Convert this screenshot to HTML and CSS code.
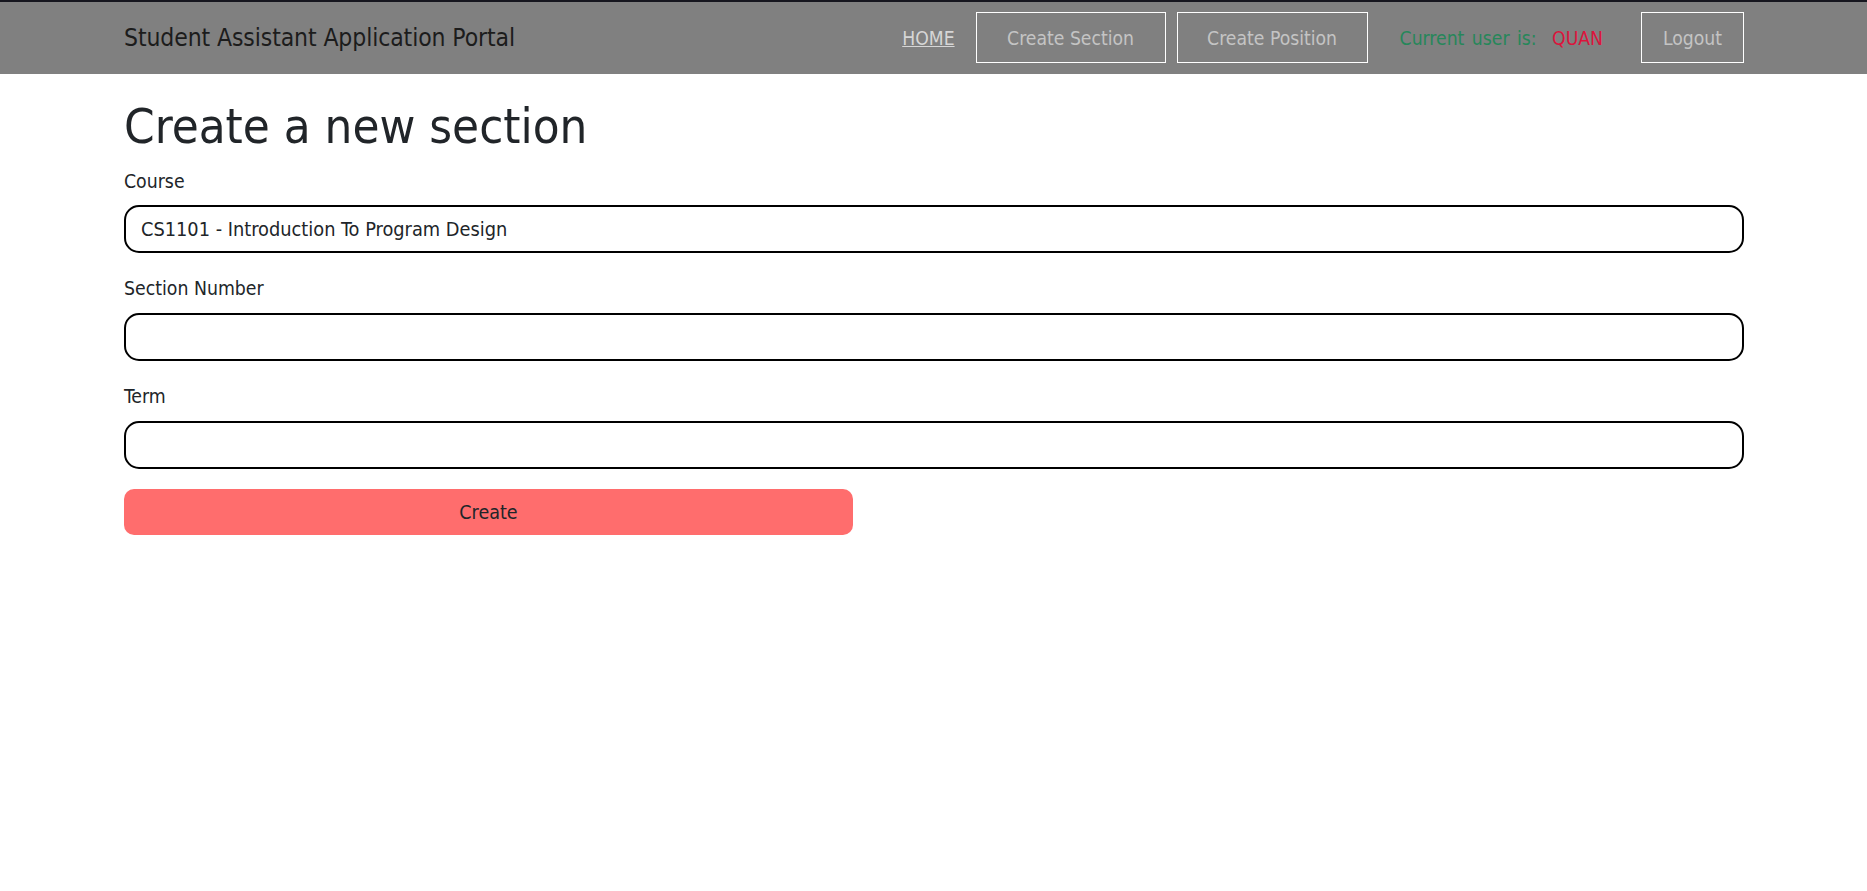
FILE: index.html
```html
<!DOCTYPE html>
<html lang="en">
<head>
<meta charset="utf-8">
<title>Create a new section</title>
<link rel="stylesheet" href="styles.css">
</head>
<body>
<header class="topbar">
  <div class="container bar-inner">
    <a class="brand" href="#">Student Assistant Application Portal</a>
    <nav class="nav">
      <a class="nav-home" href="#">HOME</a>
      <a class="nav-box box-section" href="#">Create Section</a>
      <a class="nav-box box-position" href="#">Create Position</a>
      <span class="user">Current user is: <span class="user-name">QUAN</span></span>
      <a class="nav-box box-logout" href="#">Logout</a>
    </nav>
  </div>
</header>
<main class="container">
  <h1 class="title">Create a new section</h1>
  <form class="form">
    <div class="field">
      <label class="label" for="course">Course</label>
      <div class="input select-like" id="course">CS1101 - Introduction To Program Design</div>
    </div>
    <div class="field">
      <label class="label" for="section">Section Number</label>
      <input class="input" id="section" type="text">
    </div>
    <div class="field">
      <label class="label" for="term">Term</label>
      <input class="input" id="term" type="text">
    </div>
    <button class="submit" type="button">Create</button>
  </form>
</main>
</body>
</html>
```
FILE: styles.css
```css
* { box-sizing: border-box; }
html, body { margin: 0; padding: 0; }
body {
  font-family: "DejaVu Sans Condensed", "DejaVu Sans", sans-serif;
  font-stretch: condensed;
  font-size: 19.2px;
  line-height: 1.5;
  color: #212529;
  background: #fff;
}
.container {
  width: 1620px;
  margin-left: 124px;
}
.topbar {
  background: #808080;
  border-top: 2px solid #16161f;
  height: 74px;
}
.bar-inner {
  height: 72px;
  display: flex;
  align-items: center;
  justify-content: space-between;
}
.brand {
  color: #1c1c1c;
  font-size: 24.5px;
  text-decoration: none;
  letter-spacing: -0.1px;
  margin-top: 1px;
}
.nav {
  display: flex;
  align-items: center;
  margin-top: -1px;
}
.nav-home {
  color: #d6d6d6;
  text-decoration: underline;
  margin-right: 21px;
  margin-top: 3px;
}
.nav-box {
  height: 51px;
  display: flex;
  align-items: center;
  justify-content: center;
  padding-top: 4px;
  border: 1px solid #fff;
  color: #c4c4c4;
  text-decoration: none;
}
.box-section { width: 190px; margin-right: 11px; }
.box-position { width: 191px; margin-right: 32px; }
.box-logout { width: 103px; }
.user {
  color: #26875a;
  margin-right: 38px;
  margin-top: 4px;
  word-spacing: 2px;
}
.user-name {
  color: #dc143c;
  margin-left: 8px;
}
.title {
  font-size: 48.8px;
  font-weight: 400;
  line-height: 1.2;
  margin: 24px 0 11px;
  color: #212529;
}
.form { display: flex; flex-direction: column; }
.field { margin-bottom: 22px; }
.field:last-of-type { margin-bottom: 20px; }
.label {
  display: block;
  margin-bottom: 9px;
  font-size: 19.3px;
}
.input {
  display: block;
  width: 100%;
  height: 48px;
  border: 2px solid #000;
  border-radius: 15px;
  padding: 0 15px;
  font: inherit;
  font-size: 19.8px;
  color: #212529;
  background: #fff;
  outline: none;
}
.select-like {
  display: flex;
  align-items: center;
}
.submit {
  width: 729px;
  height: 46px;
  border: none;
  border-radius: 10px;
  background: #ff6d6d;
  color: #212529;
  font: inherit;
  font-size: 19.5px;
  cursor: pointer;
}
```
